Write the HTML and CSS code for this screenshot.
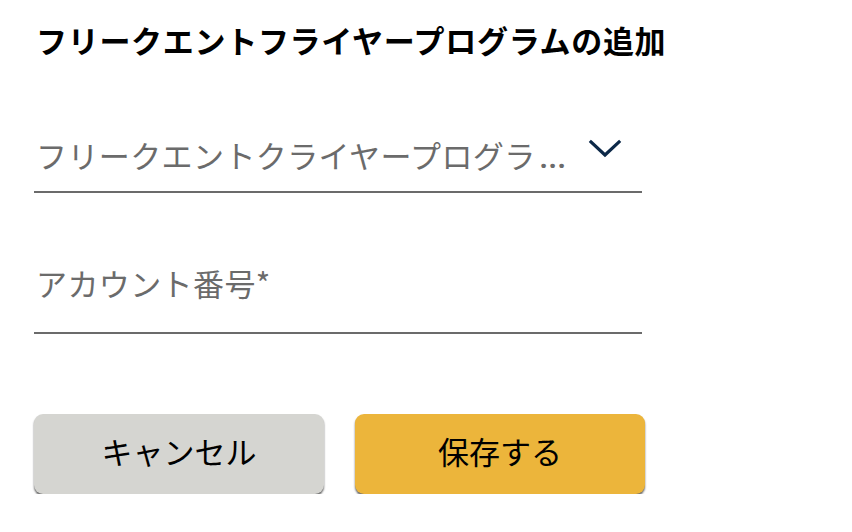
FILE: index.html
```html
<!DOCTYPE html>
<html lang="ja">
<head>
<meta charset="utf-8">
<title>フリークエントフライヤープログラムの追加</title>
<link rel="stylesheet" href="styles.css">
</head>
<body>
<div class="page">
  <h1 class="title">フリークエントフライヤープログラムの追加</h1>
  <div class="field field-select">
    <span class="placeholder">フリークエントクライヤープログラ<span class="dots">...</span></span>
    <svg class="chevron" width="34" height="20" viewBox="0 0 34 20" aria-hidden="true">
      <path d="M3 3 L17 16 L31 3" fill="none" stroke="#0c2848" stroke-width="3.2" stroke-linecap="square"/>
    </svg>
  </div>
  <div class="field field-input">
    <span class="placeholder">アカウント番号*</span>
  </div>
  <div class="actions">
    <button class="btn btn-cancel">キャンセル</button>
    <button class="btn btn-save">保存する</button>
  </div>
</div>
</body>
</html>
```
FILE: styles.css
```css
html, body {
  margin: 0;
  padding: 0;
  background: #ffffff;
}
body {
  font-family: "Noto Sans CJK JP", "Noto Sans", sans-serif;
  color: #000;
}
.page {
  padding: 20px 0 0 34px;
  width: 612px;
}
.title {
  margin: 0 0 0 2px;
  font-size: 31px;
  line-height: 40px;
  font-weight: 700;
  letter-spacing: 0.7px;
  white-space: nowrap;
}
.field {
  width: 608px;
  border-bottom: 2px solid #6b6b6b;
  display: flex;
  align-items: center;
  box-sizing: border-box;
}
.field-select {
  margin-top: 76px;
  height: 57px;
  padding: 0 20px 15px 2px;
  justify-content: space-between;
}
.field-input {
  margin-top: 84px;
  height: 57px;
  padding: 0 0 29px 2px;
  align-items: flex-end;
}
.placeholder {
  font-size: 31px;
  line-height: 40px;
  letter-spacing: 0.4px;
  color: #6b6b6b;
  white-space: nowrap;
}
.dots {
  font-family: "Roboto", "Liberation Sans", sans-serif;
  font-size: 29px;
  font-weight: 700;
  letter-spacing: 0.5px;
  margin-left: 4px;
}
.chevron {
  display: block;
  margin-top: -14px;
  flex: none;
}
.actions {
  margin-top: 80px;
  display: flex;
  gap: 31px;
}
.btn {
  width: 290px;
  height: 80px;
  border: none;
  border-radius: 9px;
  font-family: "Noto Sans CJK JP", "Noto Sans", sans-serif;
  font-size: 31px;
  color: #000;
  box-shadow: 0 2px 2px rgba(0, 0, 0, 0.6);
  padding: 0 0 8px 0;
}
.btn-cancel {
  background: #d5d5d1;
}
.btn-save {
  background: #ecb53b;
}
```
